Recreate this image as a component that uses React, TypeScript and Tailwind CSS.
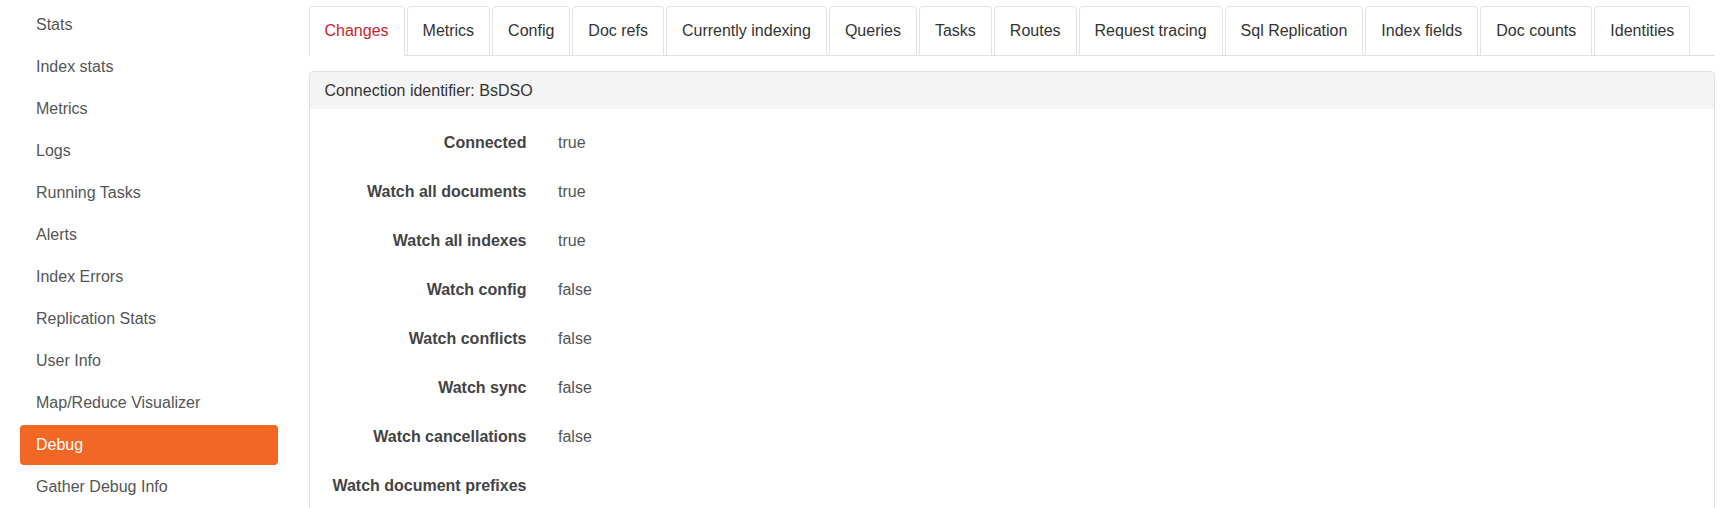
const navItems = [
  'Stats',
  'Index stats',
  'Metrics',
  'Logs',
  'Running Tasks',
  'Alerts',
  'Index Errors',
  'Replication Stats',
  'User Info',
  'Map/Reduce Visualizer',
  'Debug',
  'Gather Debug Info',
]

const tabs = [
  'Changes',
  'Metrics',
  'Config',
  'Doc refs',
  'Currently indexing',
  'Queries',
  'Tasks',
  'Routes',
  'Request tracing',
  'Sql Replication',
  'Index fields',
  'Doc counts',
  'Identities',
]

const rows: [string, string][] = [
  ['Connected', 'true'],
  ['Watch all documents', 'true'],
  ['Watch all indexes', 'true'],
  ['Watch config', 'false'],
  ['Watch conflicts', 'false'],
  ['Watch sync', 'false'],
  ['Watch cancellations', 'false'],
  ['Watch document prefixes', ''],
]

export default function App() {
  const activeNav = 'Debug'
  const activeTab = 'Changes'

  return (
    <div className="flex min-h-screen bg-white text-[16px] font-['Liberation_Sans',Arial,sans-serif] leading-[22px]">
      {/* Sidebar */}
      <div className="w-[258px] ml-[20px] pt-[5px] flex flex-col gap-[2px] shrink-0">
        {navItems.map(item => (
          <div key={item}
            className={`h-[40px] flex items-center pl-[16px] rounded-[4px] ${item === activeNav ? 'bg-[#f36724] text-white' : 'text-[#555]'}`}>
            {item}
          </div>
        ))}
      </div>

      {/* Main */}
      <div className="flex-1 ml-[30.5px] mr-[9px] pt-[6px] min-w-0">
        <div className="flex border-b border-[#dddddd]">
          {tabs.map(t => (
            <div key={t}
              className={`h-[50px] -mb-px flex items-center px-[15px] mr-[2px] border border-[#e2e2e2] rounded-t-[4px] bg-white whitespace-nowrap ${t === activeTab ? 'text-[#c9252d] border-b-white' : 'text-[#333]'}`}>
              {t}
            </div>
          ))}
        </div>

        <div className="mt-[15px] border border-[#e0e0e0] rounded-[4px] overflow-hidden">
          <div className="h-[37px] flex items-center px-[15px] bg-[#f4f4f4] text-[#333]">
            Connection identifier: BsDSO
          </div>
          <div className="pt-[9px] pb-[20px]">
            {rows.map(([label, value]) => (
              <div key={label} className="h-[49px] flex items-center">
                <div className="w-[217px] text-right font-bold text-[#444]">{label}</div>
                <div className="ml-[31.5px] text-[#555]">{value}</div>
              </div>
            ))}
          </div>
        </div>
      </div>
    </div>
  )
}
